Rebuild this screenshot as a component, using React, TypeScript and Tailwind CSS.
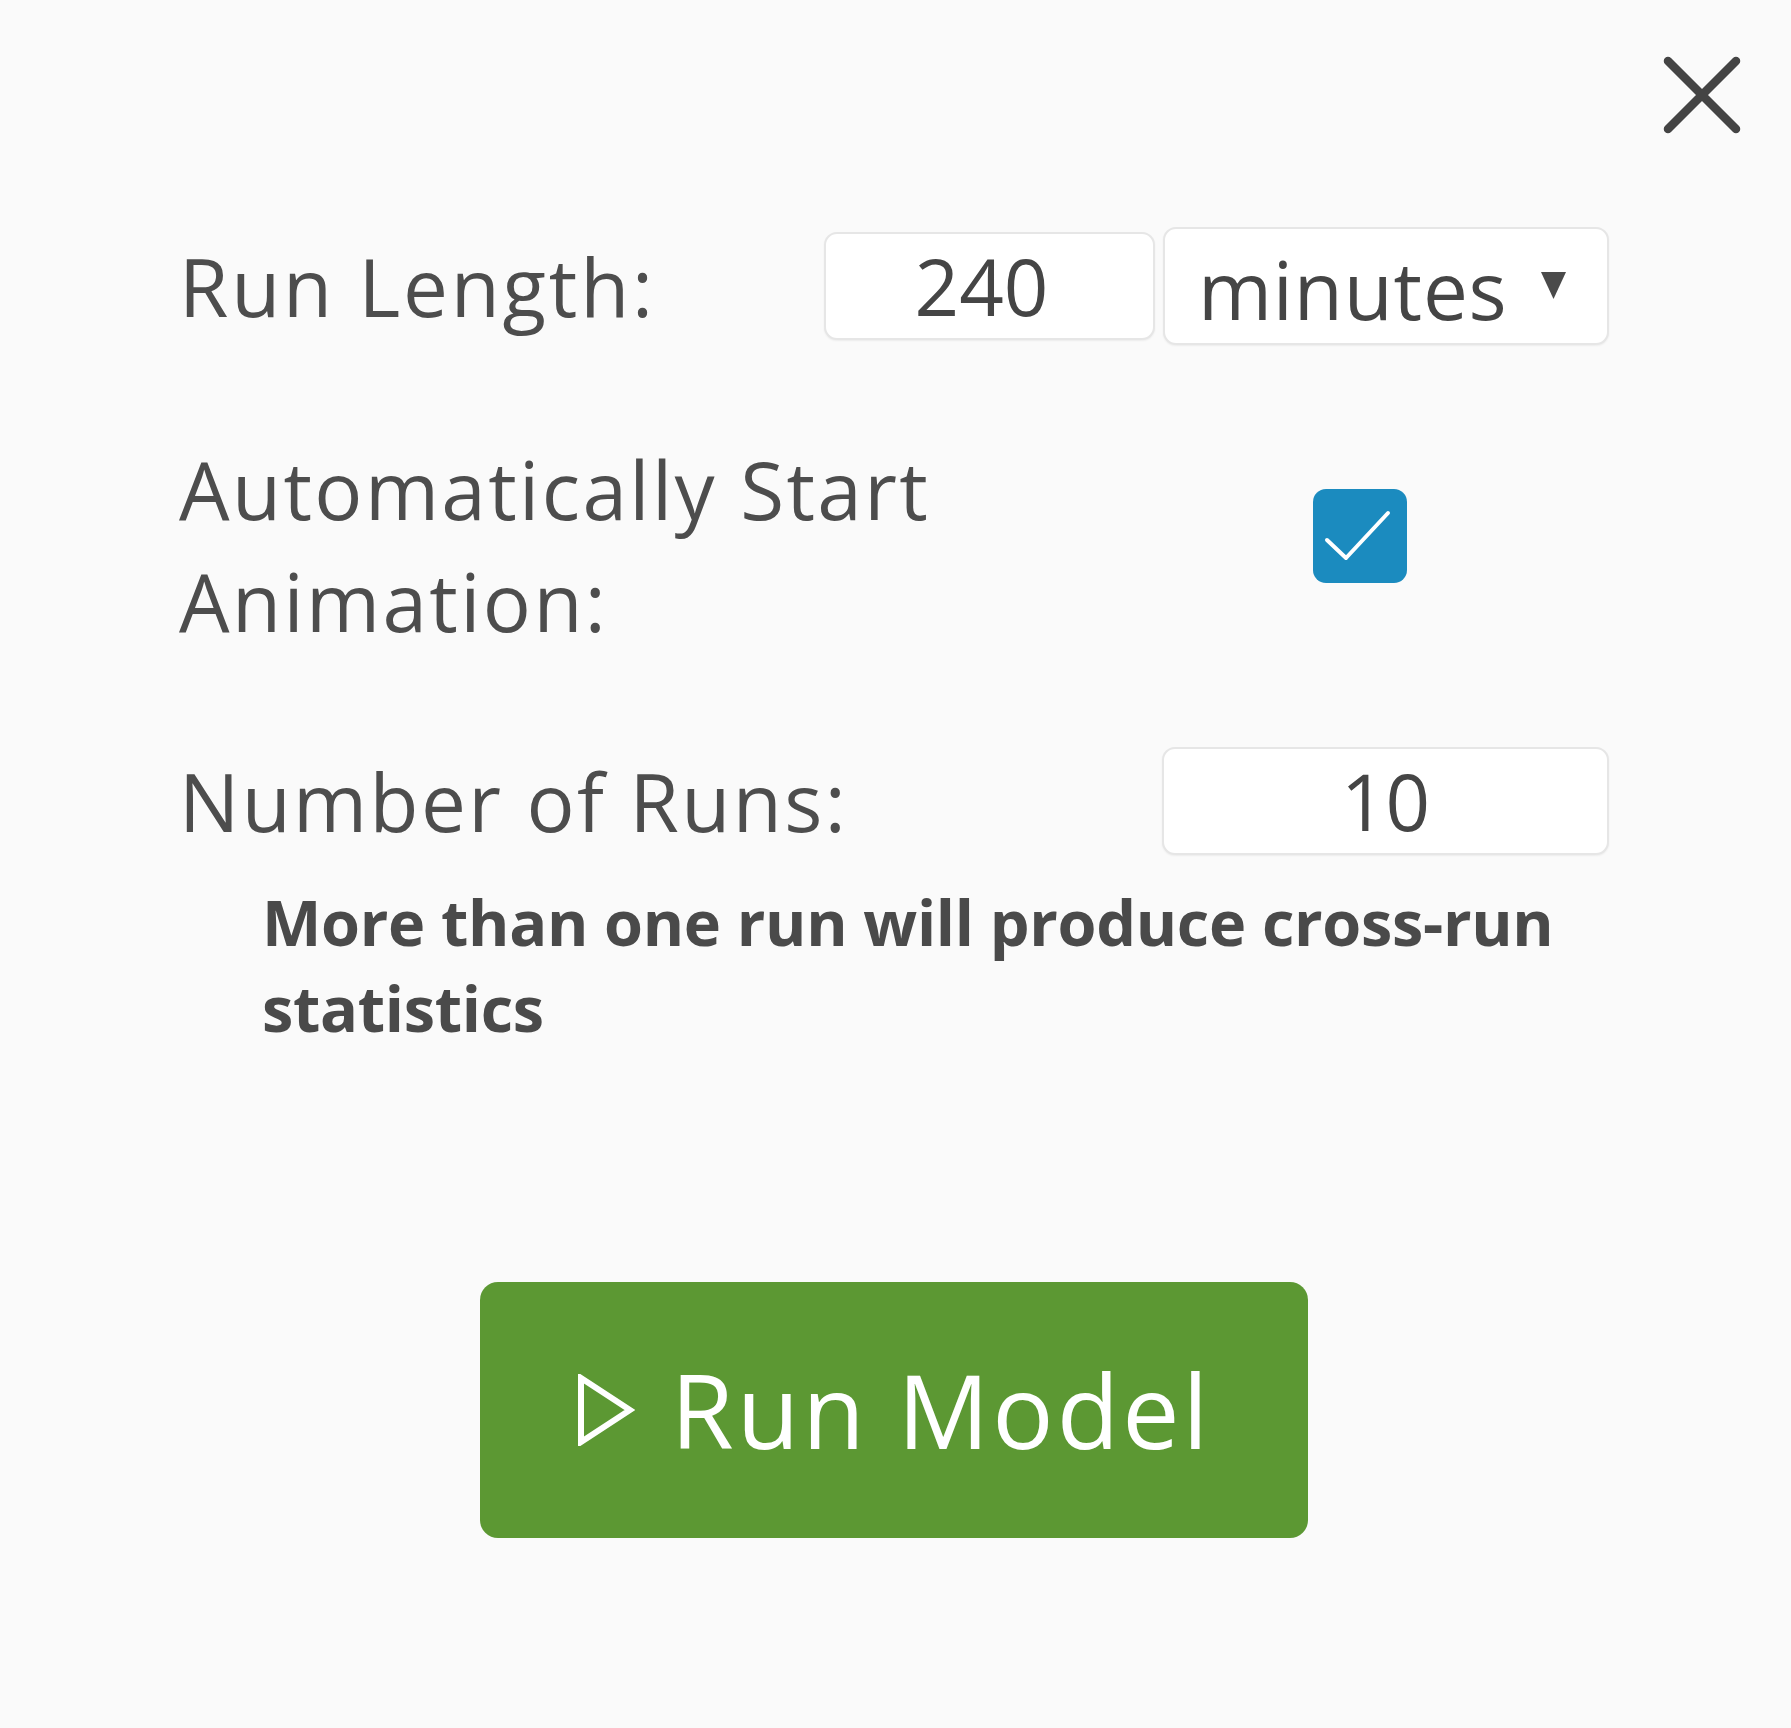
import { useState } from 'react';

const font = "font-['Open_Sans','Liberation_Sans',sans-serif]";

function CloseIcon() {
  return (
    <svg width="80" height="80" viewBox="0 0 80 80" fill="none" aria-hidden="true">
      <path d="M6 6 L74 74 M74 6 L6 74" stroke="#444444" strokeWidth="8.5" strokeLinecap="round" />
    </svg>
  );
}

function PlayIcon() {
  return (
    <svg width="58" height="72" viewBox="0 0 58 72" fill="none" aria-hidden="true">
      <path d="M4 4 L53 36 L4 68 Z" stroke="#ffffff" strokeWidth="6" strokeLinejoin="miter" />
    </svg>
  );
}

export default function App() {
  const [runLength, setRunLength] = useState('240');
  const [unit, setUnit] = useState('minutes');
  const [autoStart, setAutoStart] = useState(true);
  const [runs, setRuns] = useState('10');

  const field =
    'h-[108px] rounded-[13px] border-2 border-[#e6e6e6] bg-white text-center text-[78px] text-[#454545] shadow-[0_1px_2px_rgba(0,0,0,0.06)] outline-none ' +
    font;

  return (
    <div className={`relative h-[1728px] w-full bg-[#fafafa] text-[#4d4d4d] ${font}`}>
      <button
        type="button"
        className="absolute right-[49px] top-[55px] h-[80px] w-[80px]"
        aria-label="Close"
      >
        <CloseIcon />
      </button>

      <div className="flex flex-col pl-[179px] pr-[182px] pt-[227px]">
        {/* run length */}
        <div className="flex h-[118px] items-center">
          <label className="text-[80px] leading-[112px] tracking-[0.035em]">Run Length:</label>
          <div className="ml-auto flex items-center gap-[8px]">
            <input
              className={`${field} w-[331px] pr-[16px]`}
              value={runLength}
              onChange={(e) => setRunLength(e.target.value)}
            />
            <div className="relative">
              <select
                className={`h-[118px] w-[446px] appearance-none rounded-[13px] border-2 border-[#e6e6e6] bg-white pl-[33px] text-[80px] tracking-[0.01em] text-[#454545] shadow-[0_1px_2px_rgba(0,0,0,0.06)] outline-none ${font}`}
                value={unit}
                onChange={(e) => setUnit(e.target.value)}
              >
                <option value="seconds">seconds</option>
                <option value="minutes">minutes</option>
                <option value="hours">hours</option>
              </select>
              <svg
                className="pointer-events-none absolute right-[42px] top-[43px]"
                width="27"
                height="30"
                viewBox="0 0 27 30"
                aria-hidden="true"
              >
                <path d="M1 2 L26 2 L13.5 29 Z" fill="#4a4a4a" />
              </svg>
            </div>
          </div>
        </div>

        {/* auto start */}
        <div className="mt-[88px] flex items-start">
          <label className="w-[840px] text-[80px] leading-[112px] tracking-[0.03em]">
            Automatically Start Animation:
          </label>
          <div className="ml-auto w-[446px] pl-[150px] pt-[56px]">
            <button
              type="button"
              role="checkbox"
              aria-checked={autoStart}
              onClick={() => setAutoStart(!autoStart)}
              className={`flex h-[94px] w-[94px] items-center justify-center rounded-[13px] ${
                autoStart ? 'bg-[#1b8bbf]' : 'border-2 border-[#cccccc] bg-white'
              }`}
            >
              {autoStart && (
                <svg width="94" height="94" viewBox="0 0 94 94" fill="none" aria-hidden="true">
                  <path d="M14 51 L33 69 L75 24" stroke="#ffffff" strokeWidth="4" strokeLinecap="round" strokeLinejoin="round" />
                </svg>
              )}
            </button>
          </div>
        </div>

        {/* number of runs */}
        <div className="mt-[90px] flex h-[108px] items-center">
          <label className="text-[80px] leading-[112px] tracking-[0.03em]">Number of Runs:</label>
          <input
            className={`${field} ml-auto w-[447px]`}
            value={runs}
            onChange={(e) => setRuns(e.target.value)}
          />
        </div>

        <p className="mt-[24px] pl-[83px] text-[63px] font-bold leading-[86px] tracking-[-0.005em] text-[#4a4a4a]">
          More than one run will produce cross-run statistics
        </p>

        <button
          type="button"
          className="mx-auto mt-[231px] flex h-[256px] w-[828px] items-center justify-center gap-[36px] rounded-[18px] bg-[#5c9833] text-[102px] text-white"
        >
          <PlayIcon />
          <span className="leading-none tracking-[0.03em]">Run Model</span>
        </button>
      </div>
    </div>
  );
}
